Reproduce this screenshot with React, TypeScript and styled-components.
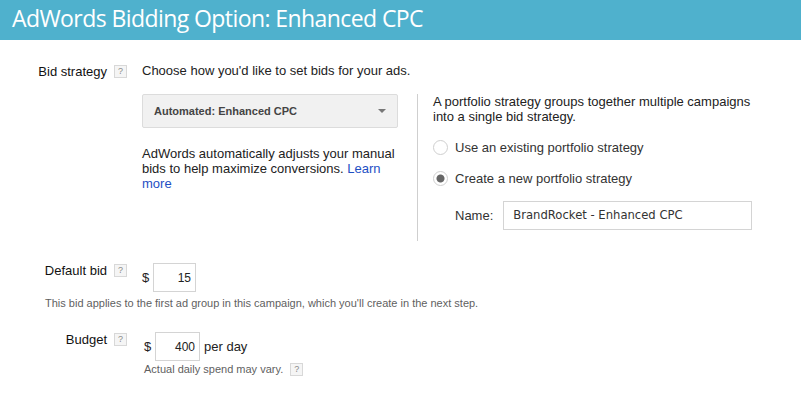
import React from "react";
import styled, { createGlobalStyle } from "styled-components";

const GlobalStyle = createGlobalStyle`
  html, body {
    margin: 0;
    padding: 0;
    background: #fff;
    font-family: "Liberation Sans", Arial, sans-serif;
    color: #222;
    font-size: 13px;
  }
`;

const Page = styled.div`
  width: 801px;
  height: 400px;
  overflow: hidden;
`;

const Header = styled.header`
  height: 40px;
  background: #4fb1cd;
  color: #fff;
  font-family: "Open Sans", sans-serif;
  font-size: 23px;
  letter-spacing: -0.58px;
  line-height: 37px;
  padding-left: 12px;
  white-space: nowrap;
`;

const Row = styled.section<{ $top: number }>`
  display: flex;
  align-items: flex-start;
  margin-top: ${(p) => p.$top}px;
`;

const LabelCell = styled.div`
  flex: none;
  width: 127px;
  display: flex;
  justify-content: flex-end;
  align-items: center;
  gap: 7px;
  height: 16px;
`;

const Label = styled.span`
  color: #111;
  font-size: 13px;
`;

const Help = styled.span`
  flex: none;
  display: inline-block;
  box-sizing: border-box;
  width: 13px;
  height: 13px;
  border: 1px solid #d8d8d8;
  background: #f5f5f5;
  color: #8a8a8a;
  font-size: 9px;
  line-height: 11px;
  text-align: center;
`;

const Strategy = styled.div`
  margin-left: 15px;
`;

const Lead = styled.div`
  height: 16px;
  line-height: 16px;
  color: #222;
`;

const Columns = styled.div`
  display: flex;
  margin-top: 15px;
`;

const LeftColumn = styled.div`
  width: 256px;
  margin-right: 19px;
`;

const Dropdown = styled.div`
  box-sizing: border-box;
  height: 34px;
  border: 1px solid #dcdcdc;
  border-radius: 2px;
  background: #f1f1f1;
  display: flex;
  align-items: center;
  justify-content: space-between;
  padding: 0 11px 0 11px;
  font-size: 11px;
  font-weight: bold;
  color: #444;
`;

const Caret = styled.span`
  width: 0;
  height: 0;
  border-left: 4px solid transparent;
  border-right: 4px solid transparent;
  border-top: 4px solid #777;
`;

const Description = styled.p`
  margin: 18px 0 0;
  line-height: 15px;
  width: 256px;
`;

const Learn = styled.a`
  color: #1e4fc4;
  text-decoration: none;
`;

const RightColumn = styled.div`
  width: 335px;
  height: 147px;
  box-sizing: border-box;
  border-left: 1px solid #cfcfcf;
  padding-left: 15px;
`;

const Intro = styled.p`
  margin: 0;
  line-height: 15px;
  color: #222;
`;

const Option = styled.label<{ $top: number }>`
  display: flex;
  align-items: center;
  gap: 7px;
  height: 16px;
  margin-top: ${(p) => p.$top}px;
  color: #333;
`;

const Radio = styled.span<{ $on?: boolean }>`
  box-sizing: border-box;
  width: 15px;
  height: 15px;
  border: 1px solid #cfcfcf;
  border-radius: 50%;
  background: ${(p) =>
    p.$on ? "radial-gradient(circle, #666 0 3.5px, #fff 4.5px)" : "#fff"};
`;

const NameRow = styled.div`
  display: flex;
  align-items: center;
  margin: 15px 0 0 22px;
  color: #333;
`;

const NameInput = styled.div`
  box-sizing: border-box;
  width: 250px;
  height: 29px;
  margin-left: 10px;
  border: 1px solid #d4d4d4;
  padding-left: 9px;
  font-family: "DejaVu Sans", sans-serif;
  font-size: 11.6px;
  line-height: 27px;
  color: #333;
`;

const AmountLine = styled.div<{ $left: number }>`
  display: flex;
  align-items: center;
  margin-left: ${(p) => p.$left}px;
  margin-top: 1px;
`;

const Dollar = styled.span`
  width: 11px;
  color: #222;
`;

const Amount = styled.div<{ $width: number }>`
  box-sizing: border-box;
  width: ${(p) => p.$width}px;
  height: 29px;
  border: 1px solid #d4d4d4;
  padding-right: 4px;
  text-align: right;
  line-height: 29px;
  font-size: 12px;
  color: #222;
`;

const PerDay = styled.span`
  margin-left: 4px;
  color: #222;
`;

const Hint = styled.p`
  margin: 4px 0 0 45px;
  font-size: 11px;
  line-height: 14px;
  color: #5f5f5f;
`;

const NoteLine = styled.div`
  display: flex;
  align-items: center;
  gap: 7px;
  margin: 1px 0 0 144px;
  height: 14px;
  font-size: 11px;
  color: #5f5f5f;
`;

export default function App() {
  return (
    <Page>
      <GlobalStyle />
      <Header>AdWords Bidding Option: Enhanced CPC</Header>

      <Row $top={23}>
        <LabelCell>
          <Label>Bid strategy</Label>
          <Help>?</Help>
        </LabelCell>
        <Strategy>
          <Lead>Choose how you'd like to set bids for your ads.</Lead>
          <Columns>
            <LeftColumn>
              <Dropdown>
                Automated: Enhanced CPC
                <Caret />
              </Dropdown>
              <Description>
                AdWords automatically adjusts your manual bids to help maximize
                conversions. <Learn href="#">Learn more</Learn>
              </Description>
            </LeftColumn>
            <RightColumn>
              <Intro>
                A portfolio strategy groups together multiple campaigns into a
                single bid strategy.
              </Intro>
              <Option $top={15}>
                <Radio />
                Use an existing portfolio strategy
              </Option>
              <Option $top={15}>
                <Radio $on />
                Create a new portfolio strategy
              </Option>
              <NameRow>
                Name:
                <NameInput>BrandRocket - Enhanced CPC</NameInput>
              </NameRow>
            </RightColumn>
          </Columns>
        </Strategy>
      </Row>

      <Row $top={21}>
        <LabelCell>
          <Label>Default bid</Label>
          <Help>?</Help>
        </LabelCell>
        <AmountLine $left={15}>
          <Dollar>$</Dollar>
          <Amount $width={43}>15</Amount>
        </AmountLine>
      </Row>
      <Hint>This bid applies to the first ad group in this campaign, which you'll create in the next step.</Hint>

      <Row $top={21}>
        <LabelCell>
          <Label>Budget</Label>
          <Help>?</Help>
        </LabelCell>
        <AmountLine $left={17}>
          <Dollar>$</Dollar>
          <Amount $width={45}>400</Amount>
          <PerDay>per day</PerDay>
        </AmountLine>
      </Row>
      <NoteLine>
        Actual daily spend may vary.
        <Help>?</Help>
      </NoteLine>
    </Page>
  );
}
